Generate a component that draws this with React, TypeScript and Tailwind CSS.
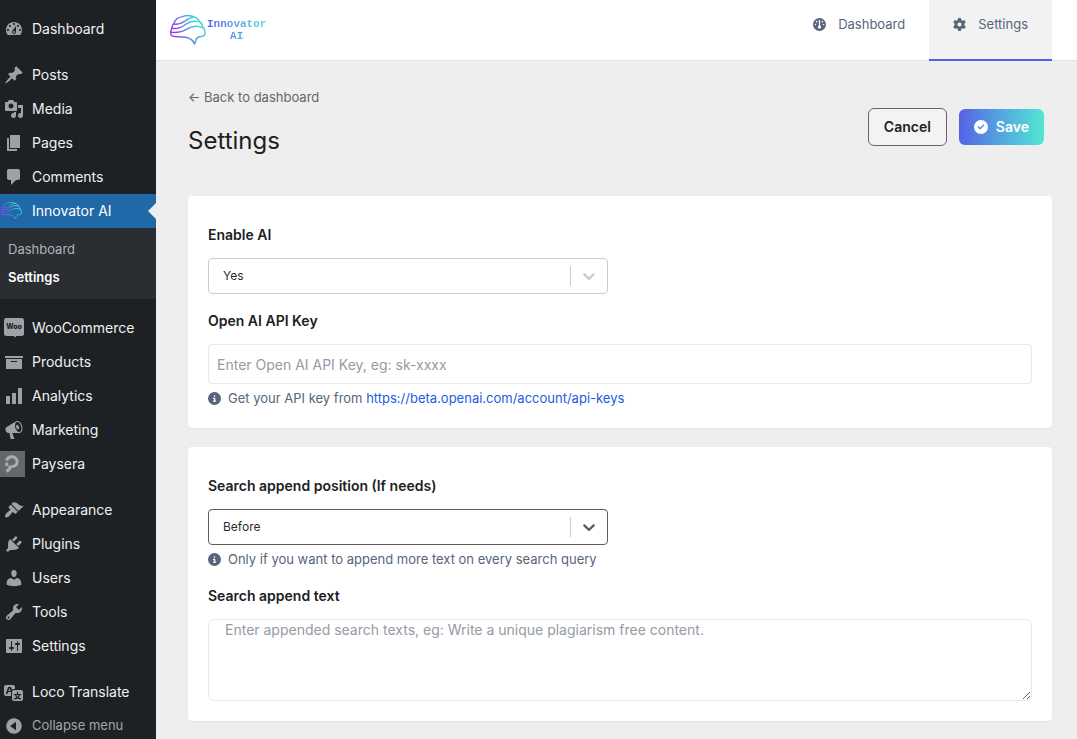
import type { ReactNode } from "react";
import { FaCircleCheck, FaCircleInfo, FaGauge, FaGear } from "react-icons/fa6";

const paths = {
  dashboard:
    "M3.76 16h12.48c1.1-1.37 1.76-3.11 1.76-5 0-4.42-3.58-8-8-8s-8 3.58-8 8c0 1.89.66 3.63 1.76 5zM10 4c.55 0 1 .45 1 1s-.45 1-1 1-1-.45-1-1 .45-1 1-1zM6 6c.55 0 1 .45 1 1s-.45 1-1 1-1-.45-1-1 .45-1 1-1zm8 0c.55 0 1 .45 1 1s-.45 1-1 1-1-.45-1-1 .45-1 1-1zm-5.37 5.55L12 7v6c0 1.1-.9 2-2 2s-2-.9-2-2c0-.57.24-1.08.63-1.45zM4 10c.55 0 1 .45 1 1s-.45 1-1 1-1-.45-1-1 .45-1 1-1zm12 0c.55 0 1 .45 1 1s-.45 1-1 1-1-.45-1-1 .45-1 1-1zm-5 3c0-.55-.45-1-1-1s-1 .45-1 1 .45 1 1 1 1-.45 1-1z",
  posts:
    "M10.44 3.02l1.82-1.82 6.36 6.35-1.83 1.82c-1.05-.68-2.48-.57-3.41.36l-.75.75c-.92.93-1.04 2.35-.35 3.41l-1.83 1.82-2.41-2.41-2.8 2.79c-.42.42-3.38 2.71-3.8 2.29s1.86-3.39 2.28-3.81l2.79-2.79L4.1 9.36l1.83-1.82c1.05.69 2.48.57 3.4-.36l.75-.75c.93-.92 1.05-2.35.36-3.41z",
  media:
    "M13 11V4c0-.55-.45-1-1-1h-1.67L9 1H5L3.67 3H2c-.55 0-1 .45-1 1v7c0 .55.45 1 1 1h10c.55 0 1-.45 1-1zM7 4.5c1.38 0 2.5 1.12 2.5 2.5S8.38 9.5 7 9.5 4.5 8.38 4.5 7 5.62 4.5 7 4.5zM14 6h5v10.5c0 1.38-1.12 2.5-2.5 2.5S14 17.88 14 16.5s1.12-2.5 2.5-2.5c.17 0 .34.02.5.05V9h-3V6zm-4 8.05V13h2v3.5c0 1.38-1.12 2.5-2.5 2.5S7 17.88 7 16.5 8.12 14 9.5 14c.17 0 .34.02.5.05z",
  pages: "M6 15V2h10v13H6zm-1 1h8v2H3V5h2v11z",
  comments:
    "M5 2h9c1.1 0 2 .9 2 2v7c0 1.1-.9 2-2 2h-2l-5 5v-5H5c-1.1 0-2-.9-2-2V4c0-1.1.9-2 2-2z",
  products: "M19 4v2H1V4h18zM2 7h16v10H2V7zm11 3V9H7v1h6z",
  analytics: "M18 18V2h-4v16h4zm-6 0V7H8v11h4zm-6 0v-8H2v8h4z",
  marketing:
    "M18.15 5.94c.46 1.62.38 3.22-.02 4.48-.42 1.28-1.26 2.18-2.3 2.48-.16.06-.26.06-.4.06-.06.02-.12.02-.18.02-.06.02-.14.02-.22.02h-6.8l2.22 5.5c.02.14-.06.26-.14.34-.08.1-.24.16-.34.16H6.95c-.1 0-.26-.06-.34-.16-.08-.08-.16-.2-.14-.34l-1-5.5H4.25l-.02-.02c-.5.06-1.08-.18-1.54-.62s-.88-1.08-1.06-1.88c-.24-.8-.2-1.56-.02-2.2.18-.62.58-1.08 1.06-1.3l.02-.02 9-5.4c.1-.06.18-.1.24-.16.06-.04.14-.08.24-.12.16-.08.28-.12.5-.18 1.04-.3 2.24.1 3.22.98s1.84 2.24 2.26 3.86zm-2.58 5.98h-.02c.4-.1.74-.34 1.04-.7.58-.7.86-1.76.86-3.04 0-.64-.1-1.3-.28-1.98-.34-1.36-1.02-2.5-1.78-3.24s-1.68-1.1-2.46-.88c-.82.22-1.4.96-1.7 2-.32 1.04-.28 2.36.06 3.72.38 1.36 1 2.5 1.8 3.24.78.74 1.62 1.1 2.48.88zm-2.54-7.08c.22-.04.42-.02.62.04.38.16.76.48 1.02 1s.42 1.2.42 1.78c0 .3-.04.56-.12.8-.18.48-.44.84-.86.94-.34.1-.8-.06-1.14-.4s-.64-.86-.78-1.5c-.18-.62-.12-1.24.02-1.72s.48-.84.82-.94z",
  appearance:
    "M14.48 11.06L7.41 3.99l1.5-1.5c.5-.56 2.3-.47 3.51.32 1.21.8 1.43 1.28 2.91 2.1 1.18.64 2.45 1.26 4.45.85zm-.71.71L6.7 4.7 4.93 6.47c-.39.39-.39 1.02 0 1.41l1.06 1.06c.39.39.39 1.03 0 1.42-.6.6-1.43 1.11-2.21 1.69-.35.26-.7.53-1.01.84C1.43 14.23.4 16.08 1.4 17.07c.99 1 2.84-.03 4.18-1.36.31-.31.58-.66.85-1.02.57-.78 1.08-1.61 1.69-2.21.39-.39 1.02-.39 1.41 0l1.06 1.06c.39.39 1.02.39 1.41 0z",
  plugins:
    "M13.11 4.36L9.87 7.6 8 5.73l3.24-3.24c.35-.34 1.05-.2 1.56.32.52.51.66 1.21.31 1.55zm-8 1.77l.91-1.12 9.01 9.01-1.19.84c-.71.71-2.63 1.16-3.82 1.16H6.14L4.9 17.26c-.59.59-1.54.59-2.12 0-.59-.58-.59-1.53 0-2.12l1.24-1.24v-3.88c0-1.13.4-3.19 1.09-3.89zm7.26 3.97l3.24-3.24c.34-.35 1.04-.21 1.55.31.52.51.66 1.21.31 1.55l-3.24 3.25z",
  users:
    "M10 9.25c-2.27 0-2.73-3.44-2.73-3.44C7 4.02 7.82 2 9.97 2c2.16 0 2.98 2.02 2.71 3.81 0 0-.41 3.44-2.68 3.44zm0 2.57L12.72 10c2.39 0 4.52 2.33 4.52 4.53v2.49s-3.65 1.13-7.24 1.13c-3.65 0-7.24-1.13-7.24-1.13v-2.49c0-2.25 1.94-4.48 4.47-4.48z",
  tools:
    "M16.68 9.77c-1.34 1.34-3.3 1.67-4.95.99l-5.41 6.52c-.99.99-2.59.99-3.58 0s-.99-2.59 0-3.57l6.52-5.42c-.68-1.65-.35-3.61.99-4.95 1.28-1.28 3.12-1.62 4.72-1.06l-2.89 2.89 2.82 2.82 2.86-2.87c.53 1.58.18 3.39-1.08 4.65zM3.81 16.21c.4.39 1.04.39 1.43 0 .4-.4.4-1.04 0-1.43-.39-.4-1.03-.4-1.43 0-.39.39-.39 1.03 0 1.43z",
  settings:
    "M18 16V4c0-.55-.45-1-1-1H3c-.55 0-1 .45-1 1v12c0 .55.45 1 1 1h14c.55 0 1-.45 1-1zM8 11h1c.55 0 1 .45 1 1s-.45 1-1 1H8v1.5c0 .28-.22.5-.5.5s-.5-.22-.5-.5V13H6c-.55 0-1-.45-1-1s.45-1 1-1h1V5.5c0-.28.22-.5.5-.5s.5.22.5.5V11zm5-2h-1c-.55 0-1-.45-1-1s.45-1 1-1h1V5.5c0-.28.22-.5.5-.5s.5.22.5.5V7h1c.55 0 1 .45 1 1s-.45 1-1 1h-1v5.5c0 .28-.22.5-.5.5s-.5-.22-.5-.5V9z",
  translate:
    "M11 7H9.49c-.63 0-1.25.3-1.59.7L7 5H4.13l-2.39 7h1.69l.74-2H7v4H2c-1.1 0-2-.9-2-2V5c0-1.1.9-2 2-2h7c1.1 0 2 .9 2 2v2zM6.51 9H4.49l1-2.93zM10 8h7c1.1 0 2 .9 2 2v7c0 1.1-.9 2-2 2h-7c-1.1 0-2-.9-2-2v-7c0-1.1.9-2 2-2zm7.25 5v-1.08h-3.17V9.75h-1.16v2.17H9.75V13h1.28c.11.85.56 1.85 1.28 2.62-.87.36-1.89.62-2.31.62-.01.02.22.97.2 1.46.84 0 2.21-.5 3.28-1.15 1.09.65 2.48 1.15 3.34 1.15-.02-.49.2-1.44.2-1.46-.43 0-1.49-.27-2.38-.63.7-.77 1.14-1.77 1.25-2.61h1.36zm-3.81 1.93c-.5-.46-.85-1.13-1.01-1.93h2.09c-.17.8-.51 1.47-1 1.93l-.04.03s-.03-.02-.04-.03z",
  collapse:
    "M10 2.2a7.8 7.8 0 1 0 0 15.6 7.8 7.8 0 0 0 0-15.6zM12 5.8v8.4L6 10z",
};

function MenuIcon({ name }: { name: keyof typeof paths }) {
  return (
    <svg viewBox="0 0 20 20" className="size-5" fill="#9ca2a7" fillRule="evenodd" aria-hidden="true">
      <path d={paths[name]} />
    </svg>
  );
}

function WooIcon() {
  return (
    <svg viewBox="0 0 20 20" className="size-5" aria-hidden="true">
      <path d="M2.5 0h15A2.5 2.5 0 0 1 20 2.5v13a2.5 2.5 0 0 1-2.5 2.500H12v1.5L9.500 18h-7A2.5 2.5 0 0 1 0 15.500v-13A2.5 2.5 0 0 1 2.500 0z" fill="#9ca2a7" />
      <text x="10" y="11" fontSize="7" fontWeight="800" textAnchor="middle" fill="#1d2123">
        Woo
      </text>
    </svg>
  );
}

function PayseraIcon() {
  return (
    <svg viewBox="0 0 25 26" className="h-[26px] w-[25px]" aria-hidden="true">
      <path d="M0 0h25v26H0z" fill="#63686d" />
      <g fill="none" stroke="#a9adb0" strokeWidth="3">
        <path d="M6.500 9.500C7.500 6.500 10 5.500 12.500 5.800c3 .4 5 2.700 4.600 5.600-.4 2.800-2.500 4.200-5.600 4.100" />
        <path d="M6.700 11.500v3.500" />
        <path d="M10.500 14.500c-.2 2-1.500 4.500-4 6" />
      </g>
    </svg>
  );
}

function BrainLogo({ className, id }: { className: string; id: string }) {
  return (
    <svg viewBox="0 0 110 92" className={className} aria-hidden="true">
      <defs>
        <linearGradient id={id} x1="0" y1="0.7" x2="1" y2="0.3">
          <stop offset="0" stopColor="#9b3df0" />
          <stop offset="0.45" stopColor="#5b8be6" />
          <stop offset="1" stopColor="#3fe3cf" />
        </linearGradient>
      </defs>
      <g fill="none" stroke={`url(#${id})`} strokeWidth="4.5" strokeLinecap="round" strokeLinejoin="round">
        <path d="M14 66C4 66 1 59 2 51c1-6 3-7 4-12 0-8 3-11 7-15C16 12 27 7 38 5c12-5 27-3 37 2 9 1 13 8 16 14 7 4 9 10 9 17 6 4 8 12 7 19-1 6-6 9-14 9-8 1-12 4-14 11l-4 12c-2-8-6-13-15-17-15-8-30-5-46-6z" />
        <path d="M13 28c15 2 24-3 34-10 9-7 19-11 28-11" />
        <path d="M6 41c18 2 30-3 41-12 12-9 26-13 44-8" />
        <path d="M4 53c18 1 34-1 46-9 16-10 32-14 54-4" />
      </g>
    </svg>
  );
}

function MenuItem({ icon, label }: { icon: ReactNode; label: string }) {
  return (
    <li>
      <a href="#" className="flex h-[34px] items-center text-sm text-[#f0f0f1]">
        <span className="flex w-8 shrink-0 items-center pl-1">{icon}</span>
        {label}
      </a>
    </li>
  );
}

function Sidebar() {
  return (
    <aside className="w-[156px] shrink-0 overflow-hidden bg-[#1d2123] pt-3">
      <nav aria-label="Admin menu">
        <ul>
          <MenuItem icon={<MenuIcon name="dashboard" />} label="Dashboard" />
        </ul>
        <ul className="mt-3">
          <MenuItem icon={<MenuIcon name="posts" />} label="Posts" />
          <MenuItem icon={<MenuIcon name="media" />} label="Media" />
          <MenuItem icon={<MenuIcon name="pages" />} label="Pages" />
          <MenuItem icon={<MenuIcon name="comments" />} label="Comments" />
          <li>
            <a href="#" className="relative flex h-[34px] items-center bg-[#1f69a8] text-sm text-white">
              <span className="flex w-8 shrink-0 items-center pl-px">
                <BrainLogo id="brain-menu" className="w-[21px]" />
              </span>
              Innovator AI
              <span className="absolute top-[9px] right-0 border-8 border-l-0 border-transparent border-r-[#eee]" />
            </a>
            <ul className="bg-[#2a2e32] px-2 pt-[7px] pb-2 text-[13px] leading-7">
              <li>
                <a href="#" className="block text-[#b0b3b5]">Dashboard</a>
              </li>
              <li>
                <a href="#" className="block font-semibold text-white">Settings</a>
              </li>
            </ul>
          </li>
        </ul>
        <ul className="mt-3">
          <MenuItem icon={<WooIcon />} label="WooCommerce" />
          <MenuItem icon={<MenuIcon name="products" />} label="Products" />
          <MenuItem icon={<MenuIcon name="analytics" />} label="Analytics" />
          <MenuItem icon={<MenuIcon name="marketing" />} label="Marketing" />
          <li>
            <a href="#" className="flex h-[34px] items-center text-sm text-[#f0f0f1]">
              <span className="w-8 shrink-0">
                <PayseraIcon />
              </span>
              Paysera
            </a>
          </li>
        </ul>
        <ul className="mt-3">
          <MenuItem icon={<MenuIcon name="appearance" />} label="Appearance" />
          <MenuItem icon={<MenuIcon name="plugins" />} label="Plugins" />
          <MenuItem icon={<MenuIcon name="users" />} label="Users" />
          <MenuItem icon={<MenuIcon name="tools" />} label="Tools" />
          <MenuItem icon={<MenuIcon name="settings" />} label="Settings" />
        </ul>
        <ul className="mt-3">
          <MenuItem icon={<MenuIcon name="translate" />} label="Loco Translate" />
        </ul>
        <button type="button" className="flex h-[34px] items-center text-[13px] text-[#a2a6a9]">
          <span className="w-8 pl-1">
            <MenuIcon name="collapse" />
          </span>
          Collapse menu
        </button>
      </nav>
    </aside>
  );
}

function Header() {
  return (
    <header className="flex h-[61px] shrink-0 justify-between border-b border-[#e2e2e2] bg-white pr-[25px] pl-[14px]">
      <a href="#" className="flex items-center">
        <BrainLogo id="brain-header" className="w-9" />
        <span className="ml-px bg-linear-to-r from-[#5a5be6] to-[#4fe0d0] bg-clip-text text-center font-['Liberation_Mono',monospace] text-[11px] leading-3 font-bold text-transparent">
          Innovator
          <br />
          AI
        </span>
      </a>
      <nav className="-mb-px flex text-[13px] leading-6 text-[#56657c]">
        <a href="#" className="flex items-start px-6 pt-3">
          <FaGauge className="mt-[6px] mr-3 size-[13px]" />
          Dashboard
        </a>
        <a href="#" className="flex items-start border-b-2 border-[#5560e4] bg-[#f2f2f2] px-6 pt-3">
          <FaGear className="mt-[6px] mr-3 size-[13px]" />
          Settings
        </a>
      </nav>
    </header>
  );
}

type SelectProps = { id: string; label: string; options: string[]; focused?: boolean };

function Select({ id, label, options, focused }: SelectProps) {
  return (
    <>
      <Label htmlFor={id}>{label}</Label>
      <div className="relative max-w-[400px]">
        <select
          id={id}
          className={`block h-9 w-full appearance-none rounded border bg-white px-[14px] text-xs text-[#2c2c2c] ${
            focused ? "border-[#5e5e5e]" : "border-[#ccc]"
          }`}
        >
          {options.map((option) => (
            <option key={option}>{option}</option>
          ))}
        </select>
        <div
          className={`pointer-events-none absolute inset-y-2 right-px flex items-center border-l border-l-[#ccc] px-2 ${
            focused ? "text-[#5e5e5e]" : "text-[#ccc]"
          }`}
        >
          <svg viewBox="0 0 20 20" className="size-5" fill="currentColor" aria-hidden="true">
            <path d="M4.516 7.548c0.436-0.446 1.043-0.481 1.576 0l3.908 3.747 3.908-3.747c0.533-0.481 1.141-0.446 1.574 0 0.436 0.445 0.408 1.197 0 1.615-0.406 0.418-4.695 4.502-4.695 4.502-0.217 0.223-0.502 0.335-0.787 0.335s-0.570-0.112-0.789-0.335c0 0-4.287-4.084-4.695-4.502s-0.436-1.170 0-1.615z" />
          </svg>
        </div>
      </div>
    </>
  );
}

function Label({ htmlFor, children }: { htmlFor: string; children: ReactNode }) {
  return (
    <label htmlFor={htmlFor} className="mb-3 block text-sm leading-[22px] font-semibold text-[#1d2123]">
      {children}
    </label>
  );
}

function Hint({ children }: { children: ReactNode }) {
  return (
    <p className="mt-1 flex items-center text-[13px] leading-5 text-[#56657c]">
      <FaCircleInfo className="mr-[7px] size-[13px]" />
      <span>{children}</span>
    </p>
  );
}

export default function App() {
  return (
    <div className="flex h-screen overflow-hidden bg-[#eee] font-[Inter,sans-serif]">
      <Sidebar />
      <div className="flex min-w-0 flex-1 flex-col">
        <Header />
        <main className="flex-1 overflow-y-auto pr-[25px] pb-4 pl-8">
          <div className="flex items-start justify-between pt-[26px] pr-2">
            <div>
              <a href="#" className="block text-[13px] leading-5 text-[#666]">
                ← Back to dashboard
              </a>
              <h1 className="mt-[18px] text-2xl leading-8 text-[#1d2123]">Settings</h1>
            </div>
            <div className="mt-[21px] flex items-center gap-3 text-sm font-semibold">
              <button type="button" className="h-[38px] rounded-md border border-[#666] bg-[#f3f3f3] px-[15px] text-[#1d2123]">
                Cancel
              </button>
              <button
                type="submit"
                form="settings-form"
                className="flex h-9 items-center gap-2 rounded-md bg-linear-to-r from-[#5560e4] to-[#52e6d2] px-[15px] text-white"
              >
                <FaCircleCheck className="size-[14px]" />
                Save
              </button>
            </div>
          </div>

          <form id="settings-form" className="mt-[39px]">
            <section className="rounded bg-white px-5 pt-7 pb-5 shadow-xs">
              <Select id="enable-ai" label="Enable AI" options={["Yes", "No"]} />
              <div className="mt-4">
                <Label htmlFor="api-key">Open AI API Key</Label>
                <input
                  id="api-key"
                  type="text"
                  placeholder="Enter Open AI API Key, eg: sk-xxxx"
                  className="block h-10 w-full rounded border border-[#e7e8f8] px-2 text-sm placeholder:text-[#949ba5]"
                />
                <Hint>
                  Get your API key from{" "}
                  <a href="https://beta.openai.com/account/api-keys" className="text-[#1c5ce0]">
                    https://beta.openai.com/account/api-keys
                  </a>
                </Hint>
              </div>
            </section>

            <section className="mt-[19px] rounded bg-white px-5 pt-7 pb-5 shadow-xs">
              <Select
                id="append-position"
                label="Search append position (If needs)"
                options={["Before", "After"]}
                focused
              />
              <Hint>Only if you want to append more text on every search query</Hint>
              <div className="mt-4">
                <Label htmlFor="append-text">Search append text</Label>
                <textarea
                  id="append-text"
                  placeholder="Enter appended search texts, eg: Write a unique plagiarism free content."
                  className="block h-[82px] w-full rounded-md border border-[#e7e8f8] px-4 text-sm placeholder:text-[#949ba5]"
                />
              </div>
            </section>
          </form>
        </main>
      </div>
    </div>
  );
}
